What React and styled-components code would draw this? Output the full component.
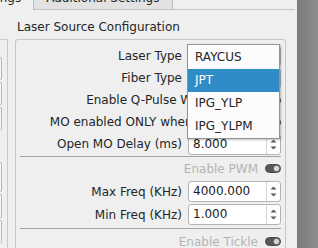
import React from "react";
import styled, { createGlobalStyle } from "styled-components";

const GlobalStyle = createGlobalStyle`
  body {
    margin: 0;
    background: #efefef;
  }
`;

const Page = styled.div`
  display: flex;
  width: 318px;
  height: 248px;
  overflow: hidden;
  background: #efefef;
  font-family: "DejaVu Sans", "Noto Sans", sans-serif;
  font-size: 12px;
  color: #232629;
`;

const Main = styled.div`
  flex: none;
  width: 297px;
  display: flex;
  flex-direction: column;
`;

const Backdrop = styled.div`
  flex: 1;
  background: linear-gradient(to right, #7b7b7b, #8e8e8e);
`;

const TabBar = styled.div`
  display: flex;
  align-items: flex-end;
  margin: -14px 2px 0 -41px;
  height: 25px;
`;

const Tab = styled.div`
  flex: none;
  height: 24px;
  line-height: 22px;
  padding: 0 12px;
  box-sizing: border-box;
  border: 1px solid #bdbdbd;
  border-bottom-color: ${(p) => (p.$active ? "#efefef" : "#c4c4c4")};
  margin-left: ${(p) => (p.$active ? "0" : "-1px")};
  background: ${(p) => (p.$active ? "#efefef" : "#e2e2e2")};
  white-space: nowrap;
`;

const TabFiller = styled.div`
  flex: 1;
  height: 1px;
  background: #c4c4c4;
`;

const Pane = styled.div`
  display: flex;
  align-items: flex-start;
  gap: 7px;
  padding-top: 10px;
`;

const Section = styled.div`
  display: flex;
  flex-direction: column;
`;

const GroupTitle = styled.div`
  height: 14px;
  line-height: 14px;
  padding-left: 2px;
  margin-bottom: 5px;
  white-space: nowrap;
`;

const LeftFrame = styled.div`
  width: 8px;
  height: 220px;
  box-sizing: border-box;
  border-top: 1px solid #c9c9c9;
  border-right: 1px solid #c9c9c9;
  border-top-right-radius: 2px;
  display: flex;
  flex-direction: column;
  gap: 2px;
  padding-top: 17px;
`;

const Stub = styled.div`
  width: 2px;
  height: ${(p) => p.$h}px;
  margin-top: ${(p) => p.$gap || 0}px;
  box-sizing: border-box;
  border: 1px solid #b5b5b5;
  border-left: none;
  border-radius: 0 3px 3px 0;
  background: #f7f7f7;
`;

const GroupBox = styled.div`
  position: relative;
  width: 271px;
  height: 220px;
  box-sizing: border-box;
  border: 1px solid #c6c6c6;
  border-radius: 3px;
  padding: 5px 4px 0 0;
  display: flex;
  flex-direction: column;
`;

const FormRow = styled.div`
  display: grid;
  grid-template-columns: 1fr 93px;
  column-gap: 6px;
  align-items: center;
  height: ${(p) => p.$h || 22}px;
`;

const Label = styled.div`
  text-align: right;
  white-space: nowrap;
`;

const ToggleRow = styled.div`
  display: flex;
  justify-content: flex-end;
  align-items: center;
  gap: 7px;
  height: ${(p) => p.$h || 23}px;
  white-space: nowrap;
  color: ${(p) => (p.$dim ? "#b4b4b4" : "#232629")};
`;

const Separator = styled.div`
  height: 1px;
  margin: ${(p) => p.$m || "1px 0 0 4px"};
  background: #a4a4a4;
`;

const Field = styled.div`
  display: flex;
  height: 21px;
  box-sizing: border-box;
  border: 1px solid #b4b4b4;
  border-radius: 3px;
  background: #ffffff;
  color: #1b1b1b;
`;

const FieldValue = styled.div`
  flex: 1;
  padding-left: 4px;
  line-height: 19px;
`;

const Arrows = styled.div`
  width: 14px;
  box-sizing: border-box;
  border-left: 1px solid #d6d6d6;
  display: flex;
  align-items: center;
  justify-content: center;
`;

const Popup = styled.div`
  position: absolute;
  left: 171px;
  top: 4px;
  width: 93px;
  box-sizing: border-box;
  border: 1px solid #949494;
  padding-top: 1px;
  background: #fcfcfc;
  box-shadow: 1px 1px 2px rgba(0, 0, 0, 0.25);
`;

const PopupItem = styled.div`
  height: 23px;
  line-height: 23px;
  padding-left: 7px;
  background: ${(p) => (p.$selected ? "#308cc6" : "transparent")};
  color: ${(p) => (p.$selected ? "#ffffff" : "#232629")};
`;

const Toggle = () => (
  <svg width="16" height="9" viewBox="0 0 16 9">
    <rect x="0.5" y="0.5" width="15" height="8" rx="4" fill="#585858" stroke="#4a4a4a" />
    <circle cx="11.5" cy="4.5" r="3.2" fill="#d9d9d9" stroke="#4a4a4a" strokeWidth="0.8" />
  </svg>
);

const SpinArrows = () => (
  <svg width="13" height="19" viewBox="0 0 13 19">
    <polygon points="3.5,7.5 6.5,4.5 9.5,7.5" fill="#5a5a5a" />
    <polygon points="3.5,11.5 6.5,14.5 9.5,11.5" fill="#5a5a5a" />
  </svg>
);

const SpinBox = ({ value }) => (
  <Field>
    <FieldValue>{value}</FieldValue>
    <Arrows>
      <SpinArrows />
    </Arrows>
  </Field>
);

const laserTypes = ["RAYCUS", "JPT", "IPG_YLP", "IPG_YLPM"];

const App = () => {
  return (
    <Page>
      <GlobalStyle />
      <Main>
        <TabBar>
          <Tab $active>Settings</Tab>
          <Tab>Additional Settings</Tab>
          <TabFiller />
        </TabBar>
        <Pane>
          <Section>
            <GroupTitle />
            <LeftFrame>
              <Stub $h={23} />
              <Stub $h={23} />
              <Stub $h={23} />
              <Stub $h={30} $gap={30} />
              <Stub $h={24} />
              <Stub $h={23} />
            </LeftFrame>
          </Section>
          <Section>
            <GroupTitle>Laser Source Configuration</GroupTitle>
            <GroupBox>
              <FormRow>
                <Label>Laser Type</Label>
                <SpinBox value="JPT" />
              </FormRow>
              <FormRow>
                <Label>Fiber Type</Label>
                <SpinBox value="" />
              </FormRow>
              <ToggleRow $h={22}>
                Enable Q-Pulse Width Modes
                <Toggle />
              </ToggleRow>
              <ToggleRow $h={22}>
                MO enabled ONLY when PWM is on
                <Toggle />
              </ToggleRow>
              <FormRow>
                <Label>Open MO Delay (ms)</Label>
                <SpinBox value="8.000" />
              </FormRow>
              <Separator />
              <ToggleRow $dim>
                Enable PWM
                <Toggle />
              </ToggleRow>
              <FormRow $h={23}>
                <Label>Max Freq (KHz)</Label>
                <SpinBox value="4000.000" />
              </FormRow>
              <FormRow $h={23}>
                <Label>Min Freq (KHz)</Label>
                <SpinBox value="1.000" />
              </FormRow>
              <Separator $m="2px 0 1px 4px" />
              <ToggleRow $dim>
                Enable Tickle
                <Toggle />
              </ToggleRow>
              <Popup>
                {laserTypes.map((t) => (
                  <PopupItem key={t} $selected={t === "JPT"}>
                    {t}
                  </PopupItem>
                ))}
              </Popup>
            </GroupBox>
          </Section>
        </Pane>
      </Main>
      <Backdrop />
    </Page>
  );
};

export default App;
